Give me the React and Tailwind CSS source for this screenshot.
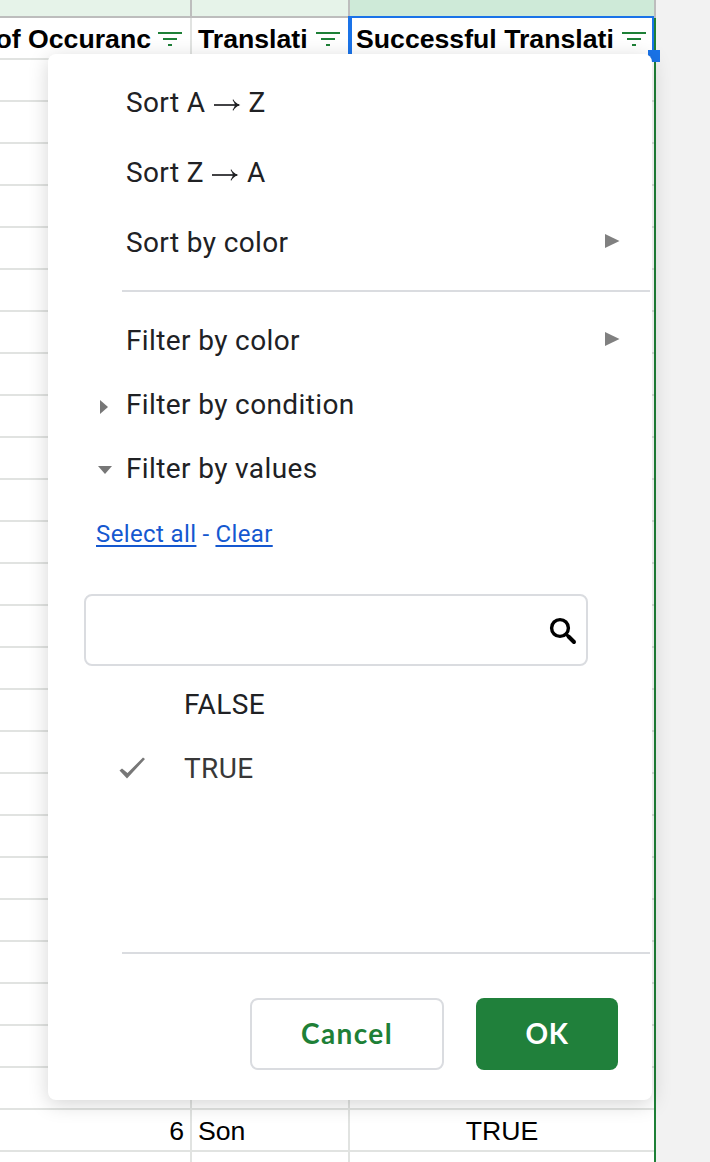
const emptyRows = Array.from({ length: 25 }, (_, i) => i);

function FilterIcon() {
  return (
    <svg width="24" height="14" viewBox="0 0 24 14" className="shrink-0" fill="#1e8037">
      <rect x="0" y="0" width="24" height="2" />
      <rect x="5" y="6" width="14" height="2" />
      <rect x="10" y="12" width="4" height="2" />
    </svg>
  );
}

function Row({ count, word, success }) {
  return (
    <div className="flex h-[42px] shrink-0 leading-[42px]">
      <div className="w-48 border-r-2 border-b-2 border-[#e1e3e1] pr-[6px] text-right">{count}</div>
      <div className="w-[158px] border-r-2 border-b-2 border-[#e1e3e1] pl-[6px]">{word}</div>
      <div className="w-[304px] border-b-2 border-[#e1e3e1] text-center">{success}</div>
    </div>
  );
}

function Submenu() {
  return (
    <svg width="15" height="14" viewBox="0 0 15 14" className="mr-8 mb-1">
      <path d="M0 0 L14.5 7 L0 14Z" fill="#808080" />
    </svg>
  );
}

function Item({ icon, label, submenu, className }) {
  return (
    <div className={`flex items-center ${className}`}>
      <div className="flex w-[78px] shrink-0 items-center pl-[49px]">{icon}</div>
      <div className="grow">{label}</div>
      {submenu && <Submenu />}
    </div>
  );
}

function Arrow() {
  return (
    <svg width="28" height="14" viewBox="0 0 28 14" className="mx-[7.5px] mt-[3px]">
      <path d="M1 7H26" stroke="#202124" strokeWidth="1.7" fill="none" />
      <path d="M20.2 1.2 Q22 5 27.3 7 Q22 9 20.2 12.8 L19.6 12 Q21.6 9 22 7 Q21.6 5 19.6 2Z" fill="#202124" />
    </svg>
  );
}

function FilterMenu() {
  return (
    <div className="absolute top-[54px] left-12 flex h-[1046px] w-[604px] flex-col rounded-lg bg-white pt-[14px] font-[Roboto,sans-serif] text-[28px] tracking-[0.38px] text-[#202124] shadow-[0_4px_20px_rgba(0,0,0,0.17)]">
      <Item className="h-[70px]" label={<div className="flex items-center">Sort A<Arrow />Z</div>} />
      <Item className="h-[70px]" label={<div className="flex items-center">Sort Z<Arrow />A</div>} />
      <Item className="h-[70px]" label="Sort by color" submenu />
      <div className="mt-3 mr-[2px] mb-[17px] ml-[74px] h-[2px] shrink-0 bg-[#dadce0]" />
      <Item className="h-16" label="Filter by color" submenu />
      <Item
        className="h-16"
        label="Filter by condition"
        icon={<svg width="14" height="14" viewBox="0 0 14 14" className="mt-1"><path d="M3 0 L11 7 L3 14Z" fill="#777" /></svg>}
      />
      <Item
        className="h-16"
        label="Filter by values"
        icon={<svg width="14" height="14" viewBox="0 0 14 14" className="mt-px ml-px"><path d="M0 3 H14 L7 11Z" fill="#777" /></svg>}
      />
      <div className="ml-12 flex h-[66px] items-center gap-[6px] text-[24px] tracking-[0.38px] text-[#1558d0]">
        <a className="underline decoration-2 underline-offset-[3px]">Select all</a>
        <span>-</span>
        <a className="underline decoration-2 underline-offset-[3px]">Clear</a>
      </div>
      <div className="mt-[27px] ml-9 flex h-[72px] w-[504px] shrink-0 items-center justify-end rounded-lg border-2 border-[#dadce0] pr-[9px]">
        <svg width="28" height="28" viewBox="0 0 28 28" fill="none" stroke="#000" className="mt-[2px]">
          <circle cx="11" cy="11" r="8.4" strokeWidth="3.4" />
          <path d="M17 17 L19 19" strokeWidth="3" />
          <path d="M19.5 19.5 L25 25" strokeWidth="4" strokeLinecap="round" />
        </svg>
      </div>
      <div className="mt-[7px] flex h-16 items-center pl-[136px]">FALSE</div>
      <div className="flex h-16 items-center pl-[70px] text-[#383838]">
        <svg width="28" height="24" viewBox="0 0 28 24" className="mr-[38px] mb-[3px]">
          <path d="M1.5 14.5 L4 12.5 L9.5 17 L25 1.5 L27 3 L9 22.5Z" fill="#777" />
        </svg>
        TRUE
      </div>
      <div className="mt-auto mr-[2px] ml-[74px] h-[2px] shrink-0 bg-[#dadce0]" />
      <div className="mt-11 mr-[34px] mb-[30px] flex shrink-0 justify-end gap-8 font-[Lato,sans-serif] font-bold">
        <button className="h-[72px] w-[194px] rounded-lg border-2 border-[#dadce0] pb-[2px] tracking-[1.4px] text-[#1e8037]">Cancel</button>
        <button className="h-[72px] w-[142px] rounded-lg bg-[#20803b] pb-[2px] tracking-[0.5px] text-white">OK</button>
      </div>
    </div>
  );
}

export default function App() {
  return (
    <div className="relative flex h-[1162px] w-[710px] overflow-hidden bg-[#f2f2f2] font-['Liberation_Sans',sans-serif] text-[26.67px] text-black">
      <div className="flex w-[656px] shrink-0 flex-col">
        <div className="flex h-[18px] shrink-0">
          <div className="w-48 border-r-2 border-b-2 border-[#bdbdbd] bg-[#e6f3e9]" />
          <div className="w-[158px] border-r-2 border-b-2 border-[#bdbdbd] bg-[#e6f3e9]" />
          <div className="w-[306px] border-r-2 border-[#bdbdbd] bg-[#ceead8]" />
        </div>
        <div className="relative flex h-[1144px] flex-col border-r-2 border-[#1e8037] bg-white">
          <div className="flex h-[42px] shrink-0 font-bold whitespace-nowrap">
            <div className="flex w-48 items-center justify-end gap-[7px] border-r-2 border-b-2 border-[#e1e3e1] pt-[2px] pr-2">
              of Occuranc
              <FilterIcon />
            </div>
            <div className="flex w-[158px] items-center justify-between border-r-2 border-b-2 border-[#e1e3e1] pt-[2px] pr-2 pl-[6px]">
              Translati
              <FilterIcon />
            </div>
            <div className="flex w-[304px] items-center justify-between pr-2 pl-[6px]">
              Successful Translati
              <FilterIcon />
            </div>
          </div>
          {emptyRows.map((i) => <Row key={i} />)}
          <Row count="6" word="Son" success="TRUE" />
          <Row />
          <div className="absolute -top-[2px] left-[348px] h-[46px] w-[306px] border-2 border-l-4 border-[#1a73e8]" />
          <div className="absolute top-8 left-[648px] h-3 w-3 bg-[#1a73e8]" />
        </div>
      </div>
      <FilterMenu />
    </div>
  );
}
